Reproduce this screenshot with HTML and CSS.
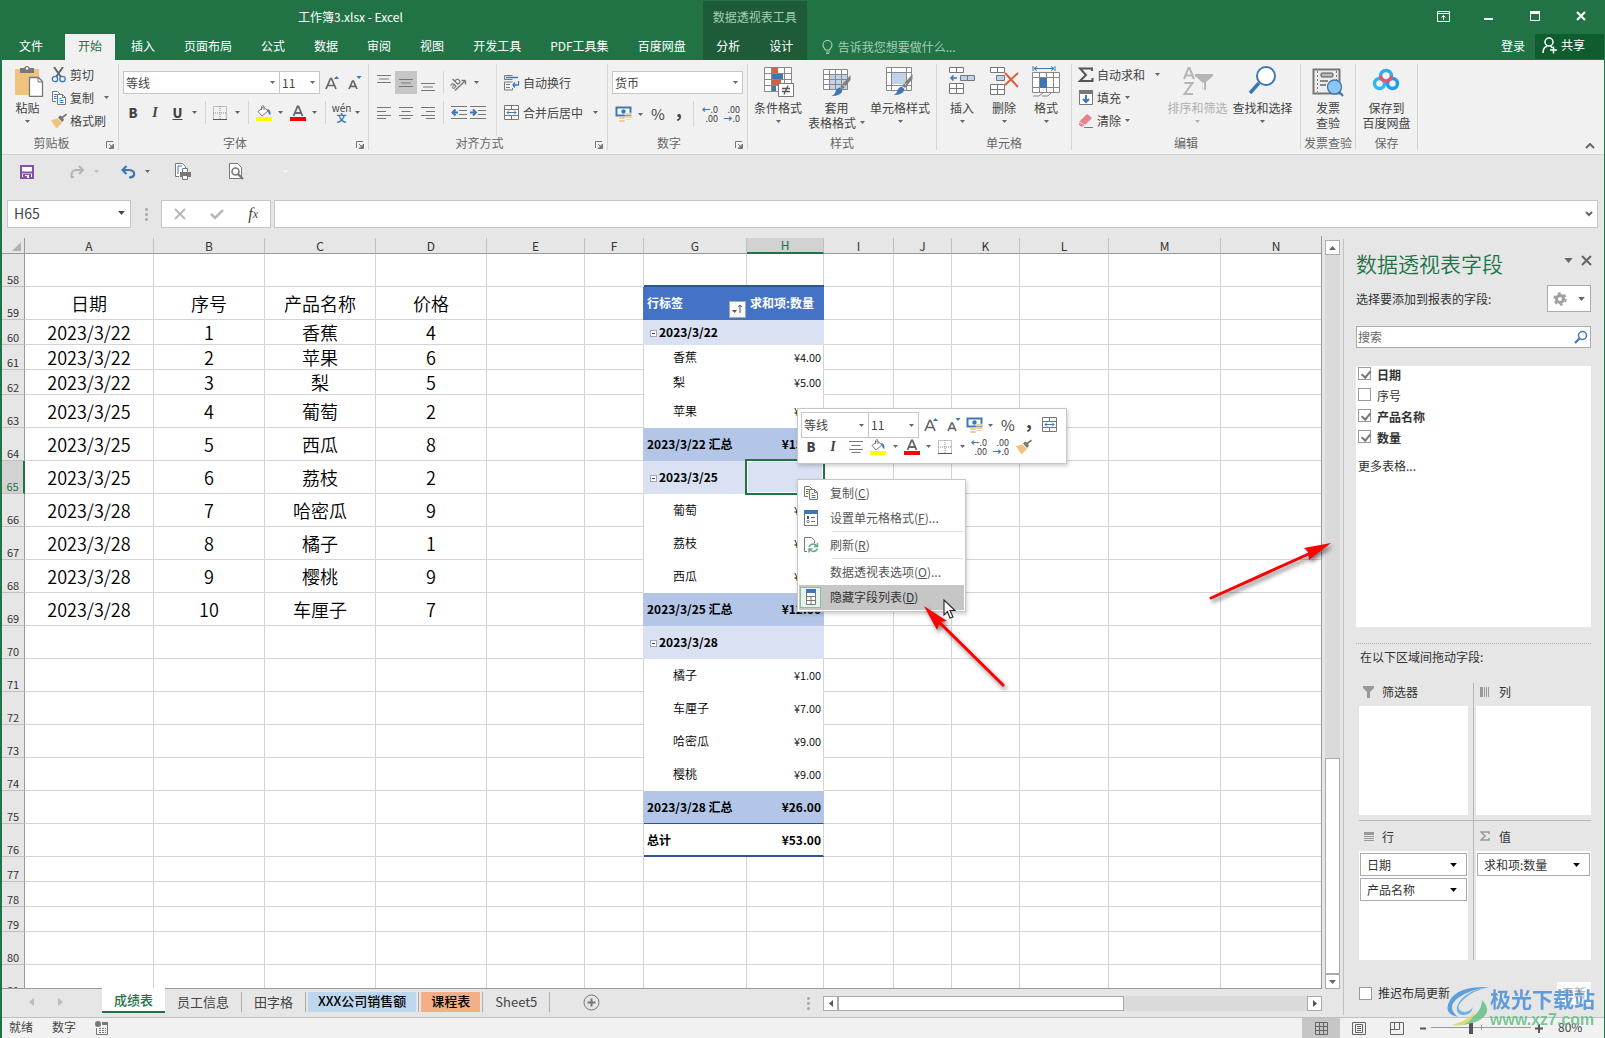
FILE: index.html
```html
<!DOCTYPE html>
<html lang="zh-CN">
<head>
<meta charset="utf-8">
<title>工作簿3.xlsx - Excel</title>
<link rel="stylesheet" href="styles.css">
</head>
<body>
<svg class="defs" aria-hidden="true">
  <symbol id="caret" viewBox="0 0 5 3"><path d="M0 0h5L2.500 3z" fill="currentColor"/></symbol>
  <symbol id="launch" viewBox="0 0 8 8"><path d="M.5 7V.5H7M3 3l3 3M7.500 3v4.500H3z" fill="none" stroke="#777"/><path d="M7.500 3.500v4h-4z" fill="#777"/></symbol>
  <symbol id="copy" viewBox="0 0 16 16"><path d="M5 11.500H1.500v-10h5l3 3" fill="#fff" stroke="#777"/><path d="M6.500 4.500h5l3 3v7h-8z" fill="#fff" stroke="#777"/><path d="M11.500 4.500v3h3" fill="none" stroke="#777"/><path d="M3 4.500h3M3 6.500h2.500M3 8.500h2.500M8.500 8.500h2M8.500 10.500h4M8.500 12.500h4" stroke="#3e78b3"/></symbol>
  <symbol id="brush" viewBox="0 0 16 16"><path d="M15 .5l-4 3-2-1L7 4.500 11 9l2-2-1-2 4-3z" fill="#777"/><path d="M6.500 5.500L0 7l1 2 4.500 6.500L11 10z" fill="#edc37e"/></symbol>
  <symbol id="grow" viewBox="0 0 15 16"><path d="M1 14L5.500 3.500h1L11 14M2.800 10.500h6.500" fill="none" stroke="#666" stroke-width="1.700"/><path d="M9 4l2.500-3L14 4z" fill="#3e78b3"/></symbol>
  <symbol id="shrink" viewBox="0 0 15 16"><path d="M1 14l3.500-8h1L9 14M2.500 11.300h5" fill="none" stroke="#666" stroke-width="1.700"/><path d="M8.500 1h5L11 4z" fill="#3e78b3"/></symbol>
  <symbol id="grid" viewBox="0 0 14 14"><path d="M.5 .5h13v13H.5zM7 0v14M0 7h14" fill="none" stroke="#888" stroke-dasharray="1 1"/><path d="M0 13.500h14" stroke="#555"/></symbol>
  <symbol id="fill" viewBox="0 0 16 16"><path d="M2 6.500L7.500 2 12 6l-6 5z" fill="#fff" stroke="#777"/><path d="M5.500 5V1.500q1.500-2 2.500 0V5" fill="none" stroke="#777"/><path d="M11 4q4 0 3.500 6Q12 9 12 6z" fill="#3e78b3"/><path d="M0 12h16v4H0z" fill="#ff0"/></symbol>
  <symbol id="fcolor" viewBox="0 0 16 16"><path d="M3.500 11L7.500 1.500h1l4 9.500M5 8h6" fill="none" stroke="#666" stroke-width="1.800"/><path d="M0 12h16v4H0z" fill="red"/></symbol>
  <symbol id="money" viewBox="0 0 18 17"><path d="M1.500 1.500h14v8h-14z" fill="#fff" stroke="#3e78b3" stroke-width="2"/><circle cx="8.500" cy="5.500" r="2.200" fill="#3e78b3"/><path d="M10 7h7v2h-7zM10 10h7v2h-7zM4 11h6v2H4zM4 14h6v2H4zM11 13h5v1h-5z" fill="#edc37e" stroke="#fff" stroke-width=".4"/></symbol>
  <symbol id="merge" viewBox="0 0 16 16"><path d="M.5 .5h14v14H.5zM.5 4.500h14M.5 10.500h14M7.500 .5v4M7.500 10.500v4" fill="#fff" stroke="#777"/><path d="M3 7.500h9M5 5.500l-2 2 2 2M10 5.500l2 2-2 2" fill="none" stroke="#3e78b3"/></symbol>
  <symbol id="al" viewBox="0 0 14 14"><path d="M0 1.500h14M0 5.500h9M0 9.500h14M0 12.500h9" stroke="#777"/></symbol>
  <symbol id="ac" viewBox="0 0 14 14"><path d="M0 1.500h14M2.500 5.500h9M0 9.500h14M2.500 12.500h9" stroke="#777"/></symbol>
  <symbol id="ar" viewBox="0 0 14 14"><path d="M0 1.500h14M5 5.500h9M0 9.500h14M5 12.500h9" stroke="#777"/></symbol>
  <symbol id="bars" viewBox="0 0 14 10"><path d="M0 1.500h14M2 5h10M0 8.500h14" stroke="#777"/></symbol>
  <symbol id="search" viewBox="0 0 14 14"><circle cx="8.500" cy="5.500" r="4" fill="none" stroke="#3e78b3" stroke-width="1.500"/><path d="M5.500 8.500L1 13" stroke="#3e78b3" stroke-width="2.200"/></symbol>
  <symbol id="paintbrush" viewBox="0 0 20 22"><path d="M19 0v5l-5 6-3-2z" fill="#808080"/><path d="M10.500 9.500l3 2.500-2 2-3-2z" fill="#808080"/><path d="M8 12.500l3 2.500q-1 6-11 6 4-2 4-5 1-3 4-3.500z" fill="#3e78b3"/></symbol>
</svg>

<div class="app">
<header class="titlebar">
  <div class="caption">
    <h1>工作簿3.xlsx - Excel</h1>
    <div class="winbtns">
      <button aria-label="功能区显示选项"><svg width="13" height="11" viewBox="0 0 13 11"><path d="M.5 .5h12v10H.5zM.5 2.500h12M6.500 9V4.500M4.500 6.500l2-2 2 2" fill="none" stroke="#fff"/></svg></button>
      <button aria-label="最小化"><svg width="10" height="11"><path d="M0 7h9v2H0z" fill="#fff"/></svg></button>
      <button aria-label="最大化"><svg width="10" height="11"><path d="M.5 .5h9v9h-9z" fill="none" stroke="#fff"/><path d="M0 0h10v3H0z" fill="#fff"/></svg></button>
      <button aria-label="关闭"><svg width="10" height="11"><path d="M1 1l8 8M9 1L1 9" stroke="#fff" stroke-width="2"/></svg></button>
    </div>
  </div>
  <nav class="tabs">
    <button>文件</button><button class="on">开始</button><button>插入</button><button>页面布局</button><button>公式</button><button>数据</button><button>审阅</button><button>视图</button><button>开发工具</button><button>PDF工具集</button><button>百度网盘</button>
    <div class="context"><span>数据透视表工具</span><div><button>分析</button><button>设计</button></div></div>
    <label class="tell"><svg width="12" height="15" viewBox="0 0 12 15"><path d="M3.500 10Q1 7 1 5a4.500 4.500 0 0 1 9 0q0 2-2.500 5zM4 12h4M4 13.500h3" fill="none" stroke="#a5cdb5" stroke-width="1.200"/></svg><input placeholder="告诉我您想要做什么..." aria-label="告诉我您想要做什么"></label>
    <button class="login">登录</button>
    <button class="share"><svg width="15" height="17" viewBox="0 0 15 17"><circle cx="7" cy="5" r="4" fill="none" stroke="#fff" stroke-width="1.500"/><path d="M1 16q0-6 4.500-7M8.500 9l2 2M11.500 9.500v7M8 13h7" fill="none" stroke="#fff" stroke-width="1.500"/></svg>共享</button>
  </nav>
</header>

<section class="ribbon">
  <div class="group g-clip">
    <div class="body">
      <button class="big"><svg width="32" height="32" viewBox="0 0 32 32"><path d="M3 4h24v26H3z" fill="#edc37e"/><path d="M8 3h4q3-4 6 0h4v5H8z" fill="#777"/><circle cx="15" cy="3.500" r="1.300" fill="#fff"/><path d="M17.500 12.500h9l4 4v15h-13z" fill="#fff" stroke="#777" stroke-width="1.300"/><path d="M26 12.500v4.500h4.500" fill="none" stroke="#777"/></svg>粘贴<svg class="c"><use href="#caret"/></svg></button>
      <div class="three">
        <button><svg width="16" height="16" viewBox="0 0 16 16"><path d="M3 0l7 10M12 0L5 10" stroke="#666" stroke-width="2"/><circle cx="4" cy="12" r="2.700" fill="none" stroke="#3e78b3" stroke-width="1.300"/><circle cx="11.500" cy="12" r="2.700" fill="none" stroke="#3e78b3" stroke-width="1.300"/></svg>剪切</button>
        <button><svg width="16" height="16"><use href="#copy"/></svg>复制<svg class="c far"><use href="#caret"/></svg></button>
        <button><svg width="16" height="16"><use href="#brush"/></svg>格式刷</button>
      </div>
    </div>
    <footer><span>剪贴板</span><button aria-label="剪贴板设置"><svg width="8" height="8"><use href="#launch"/></svg></button></footer>
  </div>
  <div class="group g-font">
    <div class="body two">
      <div class="row r-font1">
        <span class="combo"><select aria-label="字体"><option>等线</option></select><svg class="c"><use href="#caret"/></svg></span>
        <span class="combo"><select aria-label="字号"><option>11</option></select><svg class="c"><use href="#caret"/></svg></span>
        <button aria-label="增大字号"><svg width="15" height="16"><use href="#grow"/></svg></button>
        <button aria-label="减小字号"><svg width="15" height="16"><use href="#shrink"/></svg></button>
      </div>
      <div class="row r-font2">
        <button class="b">B</button><button class="i">I</button><button class="u">U</button><button aria-label="下划线选项"><svg class="c"><use href="#caret"/></svg></button><i></i>
        <button aria-label="边框"><svg width="14" height="14"><use href="#grid"/></svg></button><button aria-label="边框选项"><svg class="c"><use href="#caret"/></svg></button><i></i>
        <button aria-label="填充颜色"><svg width="16" height="16"><use href="#fill"/></svg></button><button aria-label="填充选项"><svg class="c"><use href="#caret"/></svg></button>
        <button aria-label="字体颜色"><svg width="16" height="16"><use href="#fcolor"/></svg></button><button aria-label="颜色选项"><svg class="c"><use href="#caret"/></svg></button><i></i>
        <button class="wen"><span>wén</span><span>文</span></button><button aria-label="拼音选项"><svg class="c"><use href="#caret"/></svg></button>
      </div>
    </div>
    <footer><span>字体</span><button aria-label="字体设置"><svg width="8" height="8"><use href="#launch"/></svg></button></footer>
  </div>
  <div class="group g-align">
    <div class="body">
      <div class="two">
        <div class="row r-al">
          <button aria-label="顶端对齐" class="top"><svg width="14" height="10"><use href="#bars"/></svg></button><button aria-label="垂直居中" class="sel"><svg width="14" height="10"><use href="#bars"/></svg></button><button aria-label="底端对齐" class="bot"><svg width="14" height="10"><use href="#bars"/></svg></button><i></i>
          <button aria-label="方向" class="orient"><svg width="17" height="16" viewBox="0 0 17 16"><text x="0" y="11" transform="rotate(-45 6 9)" font-size="10" fill="#555">ab</text><path d="M5 15.500L15 6M15.500 5.500v4M15.500 5.500h-4" fill="none" stroke="#777" stroke-width="1.300"/></svg></button><button aria-label="方向选项"><svg class="c"><use href="#caret"/></svg></button>
        </div>
        <div class="row r-al">
          <button aria-label="左对齐"><svg width="14" height="14"><use href="#al"/></svg></button><button aria-label="居中"><svg width="14" height="14"><use href="#ac"/></svg></button><button aria-label="右对齐"><svg width="14" height="14"><use href="#ar"/></svg></button><i></i>
          <button aria-label="减少缩进"><svg width="16" height="14" viewBox="0 0 16 14"><path d="M0 .5h16M8 4.500h8M8 8.500h8M0 12.500h16" stroke="#777"/><path d="M7 6.500H2M4.500 3.500l-3 3 3 3" fill="none" stroke="#3e78b3" stroke-width="2"/></svg></button>
          <button class="wide" aria-label="增加缩进"><svg width="16" height="14" viewBox="0 0 16 14"><path d="M0 .5h16M8 4.500h8M8 8.500h8M0 12.500h16" stroke="#777"/><path d="M0 6.500h5M3 3.500l3 3-3 3" fill="none" stroke="#3e78b3" stroke-width="2"/></svg></button>
        </div>
      </div>
      <div class="two wraps">
        <button><svg width="16" height="16" viewBox="0 0 16 16"><path d="M.5 4.500v-4h8M.5 4.500h8M.5 15v-8h8M.5 15h8v-2" fill="none" stroke="#777"/><path d="M2 9.500h4M2 12.500h4" stroke="#777"/><path d="M2 2.500h12M14.500 6v4H9M11 7.500L9 10l2 2.500" fill="none" stroke="#3e78b3" stroke-width="1.300"/></svg>自动换行</button>
        <button><svg width="16" height="16"><use href="#merge"/></svg>合并后居中<svg class="c far"><use href="#caret"/></svg></button>
      </div>
    </div>
    <footer><span>对齐方式</span><button aria-label="对齐设置"><svg width="8" height="8"><use href="#launch"/></svg></button></footer>
  </div>
  <div class="group g-num">
    <div class="body two">
      <div class="row r-num1"><span class="combo"><select aria-label="数字格式"><option>货币</option></select><svg class="c"><use href="#caret"/></svg></span></div>
      <div class="row r-num2">
        <button aria-label="会计格式"><svg width="18" height="17"><use href="#money"/></svg></button><button aria-label="会计选项"><svg class="c"><use href="#caret"/></svg></button>
        <button class="pct">%</button><button class="comma">,</button><i></i>
        <button class="dec"><span><em>←</em>.0</span><span>.00</span></button>
        <button class="dec"><span>.00</span><span><em>→</em>.0</span></button>
      </div>
    </div>
    <footer><span>数字</span><button aria-label="数字设置"><svg width="8" height="8"><use href="#launch"/></svg></button></footer>
  </div>
  <div class="group g-style">
    <div class="body">
      <button class="big"><svg width="32" height="32" viewBox="0 0 32 32"><path d="M2.500 2.500h27v24h-27zM2.500 8.500h27M2.500 14.500h27M2.500 20.500h27M9.500 2.500v24M22.500 2.500v24" fill="#fff" stroke="#888"/><path d="M10 3h6v5h-6zM10 15h9v5h-9z" fill="#dc5f3c"/><path d="M10 9h11v5H10zM10 21h4v5h-4z" fill="#3e78b3"/><path d="M16.500 18.500h15v13h-15z" fill="#fff" stroke="#777"/><path d="M20 23.500h8M20 26.500h8M26 20.500l-4 9" stroke="#555" stroke-width="1.300"/></svg>条件格式<svg class="c"><use href="#caret"/></svg></button>
      <button class="big"><svg width="32" height="32" viewBox="0 0 32 32"><path d="M2.500 4.500h24v20h-24z" fill="#fff"/><path d="M9 10h18v15H9z" fill="#c0d3ea"/><path d="M2.500 4.500h24v20h-24zM2.500 9.500h24M2.500 14.500h24M2.500 19.500h24M8.500 4.500v20M14.500 4.500v20M20.500 4.500v20" fill="none" stroke="#888"/><svg x="10" y="10" width="21" height="22"><use href="#paintbrush"/></svg></svg>套用<span class="drop">表格格式<svg class="c"><use href="#caret"/></svg></span></button>
      <button class="big"><svg width="32" height="32" viewBox="0 0 32 32"><path d="M2.500 2.500h25v23h-25zM2.500 7.500h25M2.500 20.500h25M7.500 2.500v23M22.500 2.500v23" fill="#fff" stroke="#888"/><path d="M8 8h14v11H8z" fill="#c0d3ea"/><svg x="9" y="9" width="21" height="22"><use href="#paintbrush"/></svg></svg>单元格样式<svg class="c"><use href="#caret"/></svg></button>
    </div>
    <footer><span>样式</span></footer>
  </div>
  <div class="group g-cell">
    <div class="body">
      <button class="big"><svg width="32" height="32" viewBox="0 0 32 32"><path d="M3.500 2.500h14v5h-14zM10.500 2.500v5M3.500 18.500h14v10h-14zM3.500 23.500h14M10.500 18.500v10" fill="#fff" stroke="#777"/><path d="M14.500 10.500h14v5h-14zM21.500 10.500v5" fill="#c0d3ea" stroke="#777"/><path d="M11 13H5M7.500 10.500L5 13l2.500 2.500" fill="none" stroke="#3e78b3" stroke-width="1.600"/></svg>插入<svg class="c"><use href="#caret"/></svg></button>
      <button class="big"><svg width="32" height="32" viewBox="0 0 32 32"><path d="M2.500 2.500h14v5h-14zM9.500 2.500v5M2.500 19.500h14v10h-14zM2.500 24.500h14M9.500 19.500v10" fill="#fff" stroke="#777"/><path d="M8.500 10.500h8v5h-8z" fill="#c0d3ea" stroke="#777"/><path d="M17 8l13 14M30 8L17 20" stroke="#dc5f3c" stroke-width="2"/></svg>删除<svg class="c"><use href="#caret"/></svg></button>
      <button class="big"><svg width="32" height="32" viewBox="0 0 32 32"><path d="M2.500 7.500h27v20h-27zM2.500 12.500h27M2.500 22.500h27M9.500 7.500v20M16.500 7.500v20M23.500 7.500v20" fill="#fff" stroke="#888"/><path d="M10 13h7v10h-7z" fill="#3e78b3"/><path d="M3 1v5M25 1v5M4 3.500h20M7 1.500l-3 2 3 2M21 1.500l3 2-3 2" fill="none" stroke="#3e78b3"/><path d="M3 31h6l4-3M12 31h6l3-3" fill="none" stroke="#888"/></svg>格式<svg class="c"><use href="#caret"/></svg></button>
    </div>
    <footer><span>单元格</span></footer>
  </div>
  <div class="group g-edit">
    <div class="body">
      <div class="three">
        <button><svg width="16" height="16" viewBox="0 0 16 16"><path d="M14 4V1.500H2L8 8l-6 6h12.500V11" fill="none" stroke="#555" stroke-width="2"/></svg>自动求和<svg class="c far"><use href="#caret"/></svg></button>
        <button><svg width="16" height="16" viewBox="0 0 16 16"><path d="M1.500 1.500h13v13h-13z" fill="#fff" stroke="#777"/><path d="M1 0h14v4H1z" fill="#777"/><path d="M8 5v7M5 9l3 3 3-3" fill="none" stroke="#3e78b3" stroke-width="2"/></svg>填充<svg class="c"><use href="#caret"/></svg></button>
        <button><svg width="16" height="16" viewBox="0 0 16 16"><path d="M9 1l5 4-7 7-6-3z" fill="#e8808e"/><path d="M1 9l6 3-2 2H3l-2.500-2.500z" fill="#e8808e" stroke="#fff" stroke-width=".6"/><path d="M6 14.500h9" stroke="#777"/></svg>清除<svg class="c"><use href="#caret"/></svg></button>
      </div>
      <button class="big" disabled><svg width="32" height="32" viewBox="0 0 32 32"><path d="M2 14L6.500 3h1L12 14M4 10.500h6M2.500 18h8L2.500 29h8.500" fill="none" stroke="#b5b5b5" stroke-width="2"/><path d="M13 9h18v2l-7 6v8l-4-1v-7l-7-6z" fill="#b5b5b5"/><path d="M20.500 17l1.500 1v6l-1.500-.5z" fill="#fff"/></svg>排序和筛选<svg class="c"><use href="#caret"/></svg></button>
      <button class="big"><svg width="32" height="32" viewBox="0 0 32 32"><circle cx="19" cy="11" r="9" fill="#fff" stroke="#3e78b3" stroke-width="2"/><path d="M12 18L3 28" stroke="#3e78b3" stroke-width="3.500"/></svg>查找和选择<svg class="c"><use href="#caret"/></svg></button>
    </div>
    <footer><span>编辑</span></footer>
  </div>
  <div class="group g-inv">
    <div class="body"><button class="big"><svg width="32" height="32" viewBox="0 0 32 32"><path d="M1.500 4.500h26v24h-26z" fill="#ededed" stroke="#777" stroke-width="2"/><path d="M5.500 6v21M24.500 6v21" stroke="#777" stroke-dasharray="2 2"/><rect x="9" y="8" width="12" height="4" rx="1" fill="#bbb" stroke="#555"/><path d="M8 16h8M8 20h6" stroke="#666" stroke-width="1.500"/><circle cx="22.500" cy="22" r="7" fill="#8fc5f5" stroke="#3e78a8" stroke-width="1.300"/><path d="M27.500 27l3.500 4" stroke="#3e78a8" stroke-width="2"/></svg><span>发票</span><span>查验</span></button></div>
    <footer><span>发票查验</span></footer>
  </div>
  <div class="group g-save">
    <div class="body"><button class="big"><svg width="32" height="32" viewBox="0 0 32 32"><circle cx="9.500" cy="18.500" r="5" fill="none" stroke="#2cb8f5" stroke-width="3.500"/><circle cx="22.500" cy="18.500" r="5" fill="none" stroke="#1a9df5" stroke-width="3.500"/><path d="M10.500 11a5.500 5.500 0 0 1 11 0" fill="none" stroke="#2cb0e8" stroke-width="3.500"/><path d="M10.500 10.500a5.500 5.500 0 0 0 11 0" fill="none" stroke="#ee4f72" stroke-width="3.500"/></svg><span>保存到</span><span>百度网盘</span></button></div>
    <footer><span>保存</span></footer>
  </div>
  <button class="collapse" aria-label="折叠功能区"><svg width="10" height="6"><path d="M1 5l4-4 4 4" fill="none" stroke="#666" stroke-width="2"/></svg></button>
</section>

<div class="qat">
  <button aria-label="保存"><svg width="14" height="14"><path d="M1 1h12v12H1z" fill="#fff" stroke="#8550a8" stroke-width="2"/><path d="M1 6.500h12v2H1zM3 9h8v5H3z" fill="#8550a8"/><path d="M5 10h4v3H7v-2H5z" fill="#fff"/></svg></button>
  <button class="q2" aria-label="恢复"><svg width="15" height="14"><path d="M9 1l4 4-4 4M13 5H6Q1 5 1.500 12H4" fill="none" stroke="#b5b5b5" stroke-width="2"/></svg><svg class="c pale"><use href="#caret"/></svg></button>
  <button class="q3" aria-label="撤消"><svg width="15" height="14"><path d="M5.500 1l-4 4 4 4M2 5h6q6 .5 5 5-1 2.500-5 2.500" fill="none" stroke="#3e78b3" stroke-width="2.200"/></svg><svg class="c"><use href="#caret"/></svg></button>
  <button class="q4" aria-label="快速打印"><svg width="16" height="17"><path d="M4 13.500H.5V.5h7l3 3V6" fill="#fff" stroke="#777"/><path d="M3 11V3h4" fill="none" stroke="#3e78b3"/><path d="M5 9h11v5H5z" fill="#777"/><path d="M7.500 5.500h5v4h-5zM7.500 12.500h5v4h-5z" fill="#fff" stroke="#777"/></svg></button>
  <button class="q5" aria-label="打印预览"><svg width="15" height="17"><path d="M.5 .5h8l4 4v11H.5z" fill="#fff" stroke="#777"/><circle cx="6.500" cy="8.500" r="3.500" fill="#fff" stroke="#777" stroke-width="1.600"/><path d="M9 11l5 5" stroke="#777" stroke-width="2.200"/></svg></button>
  <button class="q6" aria-label="自定义"><svg class="c"><use href="#caret"/></svg></button>
</div>

<div class="fbar">
  <label class="namebox"><input value="H65" aria-label="名称框"><svg width="7" height="4"><use href="#caret"/></svg></label>
  <span class="dots"></span>
  <div class="fbtns">
    <button aria-label="取消"><svg width="12" height="12"><path d="M1 1l10 10M11 1L1 11" stroke="#b8b8b8" stroke-width="2"/></svg></button>
    <button aria-label="输入"><svg width="14" height="12"><path d="M1 6l4 4 8-8" fill="none" stroke="#b8b8b8" stroke-width="2.500"/></svg></button>
    <button class="fx" aria-label="插入函数"><b>f</b>x</button>
  </div>
  <label class="formula"><input aria-label="编辑栏"><svg width="8" height="6"><path d="M1 1l3 3 3-3" fill="none" stroke="#666" stroke-width="2"/></svg></label>
</div>

<main class="work">
  <div class="left">
    <div class="sheetrow">
      <div class="sheet">
      <table>
        <colgroup><col class="cr"><col class="ca"><col class="cb"><col class="cb"><col class="cb"><col class="ce"><col class="cf"><col class="cg"><col class="ch"><col class="ci"><col class="cj"><col class="ck"><col class="cl"><col class="cm"><col></colgroup>
        <thead><tr><th class="corner"><svg width="9" height="9"><path d="M9 0v9H0z" fill="#b2b2b2"/></svg></th><th>A<th>B<th>C<th>D<th>E<th>F<th>G<th class="hsel">H<th>I<th>J<th>K<th>L<th>M<th>N</tr></thead>
        <tbody>
        <tr><th>58<td><td><td><td><td><td><td><td><td><td><td><td><td><td></tr>
        <tr class="heads"><th>59<td>日期<td>序号<td>产品名称<td>价格<td><td><td class="ph g"><div>行标签<button aria-label="筛选行标签"><svg width="11" height="10"><path d="M0 6h5L2.500 9z" fill="#555"/><path d="M8 9V1M6 3l2-2 2 2" fill="none" stroke="#555"/></svg></button></div><td class="ph h">求和项:数量<td><td><td><td><td><td></tr>
        <tr class="s pd"><th>60<td>2023/3/22<td>1<td>香蕉<td>4<td><td><td class="g"><button class="tog" aria-label="折叠"></button>2023/3/22<td class="h"><td><td><td><td><td><td></tr>
        <tr class="s pi"><th>61<td>2023/3/22<td>2<td>苹果<td>6<td><td><td class="g">香蕉<td class="h">¥4.00<td><td><td><td><td><td></tr>
        <tr class="s pi"><th>62<td>2023/3/22<td>3<td>梨<td>5<td><td><td class="g">梨<td class="h">¥5.00<td><td><td><td><td><td></tr>
        <tr class="pi"><th>63<td>2023/3/25<td>4<td>葡萄<td>2<td><td><td class="g">苹果<td class="h">¥6.00<td><td><td><td><td><td></tr>
        <tr class="pt"><th>64<td>2023/3/25<td>5<td>西瓜<td>8<td><td><td class="g">2023/3/22 汇总<td class="h">¥15.00<td><td><td><td><td><td></tr>
        <tr class="pd"><th class="rsel">65<td>2023/3/25<td>6<td>荔枝<td>2<td><td><td class="g"><button class="tog" aria-label="折叠"></button>2023/3/25<td class="h cur"><td><td><td><td><td><td></tr>
        <tr class="pi"><th>66<td>2023/3/28<td>7<td>哈密瓜<td>9<td><td><td class="g">葡萄<td class="h">¥2.00<td><td><td><td><td><td></tr>
        <tr class="pi"><th>67<td>2023/3/28<td>8<td>橘子<td>1<td><td><td class="g">荔枝<td class="h">¥2.00<td><td><td><td><td><td></tr>
        <tr class="pi"><th>68<td>2023/3/28<td>9<td>樱桃<td>9<td><td><td class="g">西瓜<td class="h">¥8.00<td><td><td><td><td><td></tr>
        <tr class="pt"><th>69<td>2023/3/28<td>10<td>车厘子<td>7<td><td><td class="g">2023/3/25 汇总<td class="h">¥12.00<td><td><td><td><td><td></tr>
        <tr class="pd"><th>70<td><td><td><td><td><td><td class="g"><button class="tog" aria-label="折叠"></button>2023/3/28<td class="h"><td><td><td><td><td><td></tr>
        <tr class="pi"><th>71<td><td><td><td><td><td><td class="g">橘子<td class="h">¥1.00<td><td><td><td><td><td></tr>
        <tr class="pi"><th>72<td><td><td><td><td><td><td class="g">车厘子<td class="h">¥7.00<td><td><td><td><td><td></tr>
        <tr class="pi"><th>73<td><td><td><td><td><td><td class="g">哈密瓜<td class="h">¥9.00<td><td><td><td><td><td></tr>
        <tr class="pi"><th>74<td><td><td><td><td><td><td class="g">樱桃<td class="h">¥9.00<td><td><td><td><td><td></tr>
        <tr class="pt last"><th>75<td><td><td><td><td><td><td class="g">2023/3/28 汇总<td class="h">¥26.00<td><td><td><td><td><td></tr>
        <tr class="total"><th>76<td><td><td><td><td><td><td class="g">总计<td class="h">¥53.00<td><td><td><td><td><td></tr>
        <tr class="s"><th>77<td><td><td><td><td><td><td><td><td><td><td><td><td><td></tr>
        <tr class="s"><th>78<td><td><td><td><td><td><td><td><td><td><td><td><td><td></tr>
        <tr class="s"><th>79<td><td><td><td><td><td><td><td><td><td><td><td><td><td></tr>
        <tr><th>80<td><td><td><td><td><td><td><td><td><td><td><td><td><td></tr>
        <tr><th>81<td><td><td><td><td><td><td><td><td><td><td><td><td><td></tr>
        </tbody>
      </table>
      </div>
      <div class="vscroll"><button aria-label="向上滚动"><svg width="7" height="4"><path d="M0 4l3.500-4L7 4z" fill="#666"/></svg></button><div class="vtrack"><div class="vthumb"></div></div><button aria-label="向下滚动"><svg width="7" height="4"><path d="M0 0l3.500 4L7 0z" fill="#666"/></svg></button></div>
    </div>
    <div class="sheetbar">
      <div class="nav"><svg width="5" height="8"><path d="M5 0v8L0 4z" fill="#bbb"/></svg><svg width="5" height="8"><path d="M0 0v8l5-4z" fill="#bbb"/></svg></div>
      <div class="stabs"><button class="on">成绩表</button><button>员工信息</button><button>田字格</button><button class="blue"><span>XXX公司销售额</span></button><button class="orange"><span>课程表</span></button><button>Sheet5</button></div>
      <button class="add" aria-label="新工作表"><svg width="17" height="17"><circle cx="8.500" cy="8.500" r="7.500" fill="none" stroke="#777"/><path d="M8.500 4.500v8M4.500 8.500h8" stroke="#777" stroke-width="2"/></svg></button>
      <span class="dots"></span>
      <div class="hscroll"><button aria-label="向左滚动"><svg width="4" height="7"><path d="M4 0v7L0 3.500z" fill="#555"/></svg></button><div class="htrack"><div class="hthumb"></div></div><button aria-label="向右滚动"><svg width="4" height="7"><path d="M0 0v7l4-3.500z" fill="#555"/></svg></button></div>
    </div>
  </div>
  <aside class="pane">
    <div class="ptitle"><h2>数据透视表字段</h2><button aria-label="任务窗格选项"><svg width="9" height="5"><use href="#caret"/></svg></button><button aria-label="关闭窗格"><svg width="11" height="11"><path d="M1 1l9 9M10 1l-9 9" stroke="#666" stroke-width="2"/></svg></button></div>
    <div class="pchoose"><span>选择要添加到报表的字段:</span><button aria-label="工具"><svg width="14" height="14"><circle cx="7" cy="7" r="3.500" fill="none" stroke="#a0a0a0" stroke-width="3"/><circle cx="7" cy="7" r="5.700" fill="none" stroke="#a0a0a0" stroke-width="2" stroke-dasharray="3 2.970"/></svg><svg width="7" height="4"><use href="#caret"/></svg></button></div>
    <label class="psearch"><input placeholder="搜索" aria-label="搜索"><svg width="14" height="14"><use href="#search"/></svg></label>
    <div class="plist">
      <label><input type="checkbox" checked><b>日期</b></label>
      <label><input type="checkbox"><span>序号</span></label>
      <label><input type="checkbox" checked><b>产品名称</b></label>
      <label><input type="checkbox" checked><b>数量</b></label>
      <a href="#more">更多表格...</a>
    </div>
    <p class="drag">在以下区域间拖动字段:</p>
    <div class="areas">
      <section><h3><svg width="12" height="12"><path d="M0 0h11v2L7 6v6H4V6L0 2z" fill="#999"/></svg>筛选器</h3><div></div></section>
      <section><h3><svg width="12" height="12"><path d="M0 1h3v10H0zM4 1h1v10H4zM6 1h1v10H6zM8 1h1v10H8z" fill="#999"/></svg>列</h3><div></div></section>
      <section><h3><svg width="12" height="12"><path d="M1 1h10v3H1zM1 5h10v1H1zM1 7h10v1H1zM1 9h10v1H1z" fill="#999"/></svg>行</h3><div><button>日期<svg width="7" height="4"><use href="#caret"/></svg></button><button>产品名称<svg width="7" height="4"><use href="#caret"/></svg></button></div></section>
      <section><h3><svg width="12" height="12"><path d="M9 3V1H1l4 4-4 4h8V7" fill="none" stroke="#999" stroke-width="1.500"/></svg>值</h3><div><button>求和项:数量<svg width="7" height="4"><use href="#caret"/></svg></button></div></section>
    </div>
    <div class="defer"><label><input type="checkbox">推迟布局更新</label><button disabled>更新</button></div>
  </aside>
</main>

<footer class="status">
  <span>就绪</span><span>数字</span>
  <svg width="14" height="14"><circle cx="3" cy="3" r="3" fill="#777"/><path d="M7 1h6v3H7z" fill="#777"/><path d="M1.500 7v6.500h11V4" fill="none" stroke="#777"/><path d="M4 7.500h7M4 9.500h7M4 11.500h7" stroke="#777" stroke-dasharray="2 1"/></svg>
  <div class="views">
    <button class="on" aria-label="普通"><svg width="13" height="13"><path d="M.5 .5h12v12H.5zM.5 4.500h12M.5 8.500h12M4.500 .5v12M8.500 .5v12" fill="none" stroke="#666"/></svg></button>
    <button aria-label="页面布局"><svg width="14" height="13"><path d="M.5 .5h13v12H.5zM3.500 2.500h7v8h-7zM5 4.500h4M5 6.500h4M5 8.500h4" fill="none" stroke="#666"/></svg></button>
    <button aria-label="分页预览"><svg width="14" height="13"><path d="M.5 .5h13v12H.5zM4.500 .5v7M9.500 .5v7M.5 7.500h9" fill="none" stroke="#666"/></svg></button>
  </div>
  <div class="zoom"><button aria-label="缩小"><svg width="7" height="9"><path d="M0 3.500h6v2H0z" fill="#555"/></svg></button><input type="range" min="0" max="100" value="40" aria-label="缩放"><button aria-label="放大"><svg width="9" height="9"><path d="M0 3.500h8v2H0zM3 0h2v9H3z" fill="#555"/></svg></button><output>80%</output></div>
</footer>

<div class="mini">
  <div class="row m1">
    <span class="combo"><select aria-label="字体"><option>等线</option></select><svg class="c"><use href="#caret"/></svg></span>
    <span class="combo"><select aria-label="字号"><option>11</option></select><svg class="c"><use href="#caret"/></svg></span>
    <button aria-label="增大字号"><svg width="15" height="16"><use href="#grow"/></svg></button>
    <button aria-label="减小字号"><svg width="15" height="16"><use href="#shrink"/></svg></button>
    <button aria-label="会计格式"><svg width="18" height="17"><use href="#money"/></svg></button><button aria-label="会计选项"><svg class="c"><use href="#caret"/></svg></button>
    <button class="pct">%</button><button class="comma">,</button>
    <button aria-label="合并"><svg width="16" height="16"><use href="#merge"/></svg></button>
  </div>
  <div class="row m2">
    <button class="b">B</button><button class="i">I</button>
    <button aria-label="居中"><svg width="14" height="14"><use href="#ac"/></svg></button>
    <button aria-label="填充颜色"><svg width="16" height="16"><use href="#fill"/></svg></button><button aria-label="填充选项"><svg class="c"><use href="#caret"/></svg></button>
    <button aria-label="字体颜色"><svg width="16" height="16"><use href="#fcolor"/></svg></button><button aria-label="颜色选项"><svg class="c"><use href="#caret"/></svg></button>
    <button aria-label="边框"><svg width="14" height="14"><use href="#grid"/></svg></button><button aria-label="边框选项"><svg class="c"><use href="#caret"/></svg></button>
    <button class="dec"><span><em>←</em>.0</span><span>.00</span></button>
    <button class="dec"><span>.00</span><span><em>→</em>.0</span></button>
    <button aria-label="格式刷"><svg width="16" height="16"><use href="#brush"/></svg></button>
  </div>
</div>

<div class="menu" role="menu">
  <button role="menuitem"><span><svg width="16" height="16"><use href="#copy"/></svg></span>复制(<u>C</u>)</button>
  <button role="menuitem"><span><svg width="16" height="16"><path d="M1.500 1.500h13v14h-13z" fill="#fff" stroke="#777"/><path d="M1 0h14v4H1z" fill="#3e78b3"/><path d="M8 7.500h4M8 11.500h4" stroke="#777"/><path d="M4 6h2v3H4z" fill="#555"/><circle cx="5" cy="11.500" r="1.200" fill="none" stroke="#777"/></svg></span>设置单元格格式(<u>F</u>)...</button>
  <hr>
  <button role="menuitem"><span><svg width="16" height="16"><path d="M4 14.500H1.500V.5h7l3 3V6" fill="#fff" stroke="#777"/><path d="M6 10q1-3 4.500-3 2 0 3 2M14.500 6v3.500H11M14.500 11.500q-1 3-4.500 3-2 0-3-2M6 15.500V12h3.500" fill="none" stroke="#68a890" stroke-width="1.500"/></svg></span>刷新(<u>R</u>)</button>
  <hr>
  <button role="menuitem"><span></span>数据透视表选项(<u>O</u>)...</button>
  <button role="menuitem" class="hot"><span><svg width="12" height="16"><path d="M1.500 1.500h9v14h-9zM1.500 7.500h9M1.500 11.500h9M6 7v8" fill="#fff" stroke="#777"/><path d="M1 0h10v4H1z" fill="#3e78b3"/></svg></span>隐藏字段列表(<u>D</u>)</button>
</div>

<svg class="arrow a1" width="130" height="70" viewBox="0 0 130 70"><path d="M6 60L108 14" stroke="red" stroke-width="3" stroke-linecap="round"/><path d="M126 5L99 10l4 4 1 8z" fill="red"/></svg>
<svg class="arrow a2" width="92" height="92" viewBox="0 0 92 92"><path d="M83 83L20 21" stroke="red" stroke-width="3" stroke-linecap="round"/><path d="M4 4l23 15-7 1-3 8z" fill="red"/></svg>
<svg class="cursor" width="14" height="21" viewBox="0 0 14 21"><path d="M1 1v15l3.500-3.500L7 19l3-1-3-6.500h5z" fill="#fff" stroke="#223" stroke-width="1.100"/></svg>
<div class="mark"><svg width="44" height="42" viewBox="0 0 44 42"><path d="M43 1Q28 4 18 13q-9 8-3 12 7 3 12-4-2 9-11 8-8-2-4-11Q20 4 43 1z" fill="#58a9e0"/><path d="M43 1Q12 0 4 14-4 28 12 31 0 21 12 12 22 4 43 1z" fill="#4a93d8"/><path d="M36 14q12 12-4 21-11 5-26 4 17-4 25-12 5-6 5-13z" fill="#68c08a"/><path d="M6 39q18-5 23-14-2 10-12 14z" fill="#dcd85a"/></svg><p><strong>极光下载站</strong><span>www.xz7.com</span></p></div>
</div>
</body>
</html>
```
FILE: styles.css
```css
* { box-sizing: border-box; }
body { margin: 0; font: 12px/16px "Noto Sans CJK SC", "Noto Sans", sans-serif; color: #444; }
button, input, select { font: inherit; color: inherit; margin: 0; padding: 0; border: 0; background: none; border-radius: 0; outline: 0; }
button { display: flex; align-items: center; justify-content: center; white-space: nowrap; }
svg { display: block; flex: none; }
h1, h2, h3, p { margin: 0; font-weight: 400; font-size: 12px; }
.defs { position: absolute; width: 0; height: 0; }
.c { width: 5px; height: 3px; color: #666; }
.app { position: relative; display: flex; flex-direction: column; height: 100vh; overflow: hidden; background: #e6e6e6; border-left: 2px solid #217346; border-right: 1px solid #217346; }

/* title bar and tabs */
.titlebar { background: #217346; color: #fff; }
.caption { display: flex; height: 34px; align-items: center; justify-content: space-between; padding: 0 18px 0 296px; }
.winbtns { display: flex; gap: 36px; padding-bottom: 2px; }
.winbtns button { width: 10px; }
.tabs { display: flex; height: 26px; align-items: stretch; }
.tabs > button { padding: 0 13px 3px; margin-right: 3px; }
.tabs > button:first-child { padding-left: 17px; margin-right: 9px; }
.tabs .on { background: #f1f1f1; color: #217346; }
.context { width: 104px; margin: -33px 0 0 1px; background: #1e5c39; display: flex; flex-direction: column; align-items: center; color: #a5cdb5; line-height: 32px; }
.context div { display: flex; flex: 1; gap: 29px; color: #fff; line-height: 16px; padding-bottom: 2px; }
.tell { display: flex; align-items: center; gap: 4px; margin-left: 15px; flex: 1; }
.tell input { flex: 1; }
.tell input::placeholder { color: #a5cdb5; opacity: 1; }
.tabs .login { padding: 0 10px 3px; margin: 0; }
.tabs .share { background: #0f5c2f; width: 69px; justify-content: flex-start; gap: 4px; padding: 0 0 3px 7px; margin: 0 0 1px; }

/* ribbon */
.ribbon { position: relative; display: flex; height: 95px; background: #f1f1f1; border-bottom: 1px solid #d0d0d0; flex: none; }
.group { display: flex; flex-direction: column; margin: 4px 0; border-right: 1px solid #d5d5d5; height: 86px; flex: none; }
.body { flex: 1; display: flex; }
.group footer { display: flex; height: 14px; line-height: 14px; color: #666; }
.group footer span { flex: 1; text-align: center; white-space: nowrap; }
.group footer button { width: 17px; padding-top: 3px; }
.g-clip { width: 117px; }
.g-font { width: 250px; }
.g-align { width: 239px; }
.g-num { width: 140px; }
.g-style { width: 189px; }
.g-cell { width: 135px; }
.g-edit { width: 229px; }
.g-inv { width: 55px; }
.g-save { width: 62px; }
.g-clip .big { width: 49px; padding-left: 2px; }
.g-style .body { padding-left: 2px; }
.g-style .big:nth-child(1) { width: 56px; }
.g-style .big:nth-child(2) { width: 61px; }
.g-style .big:nth-child(3) { width: 66px; }
.g-cell .body { padding-left: 4px; }
.g-cell .big { width: 42px; }
.g-edit .big { width: 65px; }
.g-edit .three { width: 93px; padding-left: 6px; }
.g-inv .body, .g-save .body { justify-content: center; }
.big { display: flex; flex-direction: column; justify-content: flex-start; line-height: 15px; padding-top: 1px; }
.big > svg:first-child { margin-bottom: 3px; }
.big > .c { margin-top: 5px; }
.big .drop { display: flex; align-items: center; gap: 4px; }
.big:disabled, .big:disabled .c { color: #b0b0b0; }
.three { display: flex; flex-direction: column; margin-top: -1px; }
.three button { height: 23px; justify-content: flex-start; gap: 3px; }
.three .c { margin-left: 1px; }
.three .far { margin-left: 7px; }
.two { display: flex; flex-direction: column; padding-top: 7px; gap: 7px; }
.g-font .two, .g-align .two, .g-num .two { padding-left: 4px; }
.row { display: grid; height: 23px; }
.row i { width: 1px; background: #d5d5d5; justify-self: center; }
.r-font1 { grid-template-columns: 157px 40px 25px 21px; }
.r-font2 { grid-template-columns: 20px 24px 21px 13px 8px 22px 13px 8px 23px 11px 23px 11px 11px 21px 11px; }
.r-al { grid-template-columns: 22px 22px 22px 8px 23px 13px 9px; }
.r-al .wide { justify-content: flex-start; grid-column: span 2; }
.r-al .top { padding-bottom: 8px; }
.r-al .bot { padding-top: 8px; }
.sel { background: #c6c6c6; }
.wraps { border-left: 1px solid #dcdcdc; margin-left: 4px; }
.g-align .wraps { padding-left: 7px; }
.wraps button { height: 23px; gap: 3px; justify-content: flex-start; }
.wraps .far { margin-left: 7px; }
.r-num1 { grid-template-columns: 131px; }
.r-num2 { grid-template-columns: 24px 9px 26px 16px 12px 22px 22px; }
.combo { display: flex; align-items: center; background: #fff; border: 1px solid #c6c6c6; padding-right: 4px; }
.combo + .combo { border-left: 0; }
.combo select { appearance: none; flex: 1; min-width: 0; height: 20px; padding-left: 2px; }
.b, .u { font-weight: 900; font-size: 13px; }
.i { font: italic bold 14px "Liberation Serif", serif; }
.u { text-decoration: underline; }
.pct { font-size: 15px; }
.comma { font-size: 18px; font-weight: 700; padding-bottom: 10px; }
.wen { flex-direction: column; font-size: 10px; line-height: 10px; }
.wen span + span { color: #3e78b3; font-weight: 700; }
.dec { flex-direction: column; align-items: flex-end; padding-right: 3px; font-size: 9px; line-height: 9px; }
.dec em { font-style: normal; font-weight: 900; color: #3e78b3; }
.collapse { position: absolute; right: 9px; bottom: 5px; }

/* quick access and formula bar */
.qat { display: flex; height: 35px; align-items: center; padding: 0 0 2px 18px; flex: none; }
.qat button { gap: 9px; height: 16px; }
.q2 { margin-left: 36px; }
.q3 { margin-left: 22px; }
.q4 { margin-left: 25px; }
.q5 { margin-left: 38px; }
.q6 { margin-left: 39px; }
.qat .pale { color: #bbb; }
.qat .q6 .c { color: #f8f8f8; }
.fbar { display: flex; height: 38px; padding: 10px 6px 0 5px; align-items: stretch; flex: none; }
.fbar > * { height: 28px; }
.namebox, .fbtns, .formula { background: #fff; border: 1px solid #c6c6c6; display: flex; align-items: center; }
.namebox { width: 124px; padding: 0 5px 2px 6px; font-size: 14px; }
.namebox input { flex: 1; min-width: 0; }
.dots { width: 3px; margin: 0 13px 0 14px; background: radial-gradient(circle, #aaa 1px, transparent 2px) center / 3px 5px; align-self: center; }
.fbar .dots { height: 15px; }
.fbtns { width: 110px; justify-content: space-between; padding: 0 12px; }
.fx { font: italic 12px "Liberation Serif", serif; }
.fx b { font-size: 16px; font-weight: 400; }
.formula { flex: 1; margin-left: 3px; padding-right: 4px; }
.formula input { flex: 1; }

/* worksheet */
.work { flex: 1; display: flex; min-height: 0; }
.left { flex: 1; display: flex; flex-direction: column; min-width: 0; padding-top: 8px; }
.sheetrow { flex: 1; display: flex; min-height: 0; }
.sheet { flex: 1; min-width: 0; overflow: hidden; border-bottom: 1px solid #999; padding-top: 2px; }
.sheet { border-right: 1px solid #999; }
table { width: calc(100% + 11px); table-layout: fixed; border-spacing: 0; background: #fff; }
.cr { width: 23px; }
.ca { width: 129px; }
.cb { width: 111px; }
.ce { width: 98px; }
.cf { width: 59px; }
.cg { width: 103px; }
.ch { width: 77px; }
.ci { width: 70px; }
.cj { width: 58px; }
.ck { width: 68px; }
.cl { width: 89px; }
.cm { width: 112px; }
th { background: #e6e6e6; font-weight: 400; color: #333; padding: 0; }
thead th { height: 16px; line-height: 15px; border-right: 1px solid #c0c0c0; border-bottom: 1px solid #999; }
thead th:first-child { border-right-color: #999; }
.corner svg { margin: 1px 3px 0 auto; }
.hsel { background: #d2d2d2; color: #217346; border-bottom: 2px solid #217346; line-height: 14px; }
tbody th { border-right: 1px solid #999; border-bottom: 1px solid #c0c0c0; vertical-align: bottom; font-size: 11px; line-height: 13px; }
th.rsel { background: #d2d2d2; color: #217346; border-right: 2px solid #217346; }
td { height: 33px; padding: 0; border-right: 1px solid #d4d4d4; border-bottom: 1px solid #d4d4d4; text-align: center; font-size: 18px; font-weight: 350; line-height: 20px; color: #000; white-space: nowrap; }
.s td { height: 25px; }
td.g { text-align: left; padding-left: 3px; font-size: 12px; line-height: 16px; border-right: 0; border-bottom-color: transparent; }
td.h { text-align: right; padding-right: 2px; font-size: 11px; line-height: 16px; border-bottom-color: transparent; }
.pi td.g { padding-left: 29px; }
.pd .g, .pd .h, .pt .g, .pt .h, td.ph { font-weight: 700; border-color: transparent; }
.pd .g, .pd .h { background: #d9e1f2; }
.pt .g, .pt .h { background: #b4c6e7; }
.pd td.g { padding-left: 6px; box-shadow: -1px 0 #d9e1f2; }
.pt .g { box-shadow: -1px 0 #b4c6e7; }
.pt .h, .total .h { font-size: 12px; }
.last td.g, .last td.h { border-bottom-color: #2f5496; }
.total td.g, .total td.h { font-weight: 700; border-bottom: 2px solid #2f5496; }
td.ph { background: #4472c4; color: #fff; font-size: 12px; box-shadow: 0 -2px #2f5496; }
td.ph.g { box-shadow: -1px 0 #4472c4, 0 -2px #2f5496; }
td.ph.h { text-align: left; padding: 0 0 0 3px; font-size: 12px; }
.ph div { display: flex; justify-content: space-between; align-items: center; height: 30px; }
.ph button { width: 17px; height: 17px; background: #f8f8f8; border: 1px solid #aaa; margin: 12px 1px 0 0; }
.tog { display: inline-flex; width: 7px; height: 7px; border: 1px solid #9aa6bd; background: linear-gradient(#445, #445) center / 3px 1px no-repeat, #fff; margin-right: 2px; vertical-align: 1px; }
.cur { position: relative; }
.cur::after { content: ""; position: absolute; inset: -2px; border: 2px solid #217346; box-shadow: inset 0 0 0 1px #fff; }
.vscroll { width: 21px; padding: 4px 3px 0; display: flex; flex-direction: column; }
.vscroll button, .hscroll button { width: 15px; height: 15px; background: #fff; border: 1px solid #ababab; flex: none; }
.vtrack { flex: 1; background: #dadada; display: flex; flex-direction: column; justify-content: flex-end; }
.vthumb { height: 30%; background: #fff; border: 1px solid #ababab; }

.sheetbar { display: flex; height: 28px; flex: none; padding-right: 21px; }
.nav { display: flex; width: 100px; padding: 9px 0 0 27px; gap: 24px; }
.stabs { display: flex; height: 24px; font-size: 13px; margin-top: -1px; }
.stabs button { padding: 0 12px 1px; border-right: 1px solid #ababab; height: 20px; margin-top: 4px; }
.stabs .on { background: #fff; color: #217346; font-weight: 500; border-right: 0; border-bottom: 2px solid #217346; height: 25px; margin: 0; padding-bottom: 0; }
.stabs .blue, .stabs .orange { padding: 0 2px 1px; color: #000; font-weight: 500; }
.stabs span { padding: 1px 10px 3px; }
.blue span { background: #bdd7ee; }
.orange span { background: #f4b084; }
.add { margin-left: 33px; height: 22px; padding-top: 4px; }
.sheetbar .dots { height: 15px; margin: 0 13px 0 auto; }
.hscroll { display: flex; flex: 0 1 499px; padding-top: 7px; }
.htrack { flex: 1; background: #dadada; height: 15px; }
.hthumb { width: 61%; height: 15px; background: #fff; border: 1px solid #ababab; }

/* field pane */
.pane { width: 261px; flex: none; margin: 11px 0 2px; border-left: 1px solid #c0c0c0; padding: 0 13px 0 12px; display: flex; flex-direction: column; color: #333; }
.ptitle { display: flex; height: 46px; align-items: center; gap: 13px; padding-top: 1px; }
.ptitle button { color: #666; padding-bottom: 4px; }
.ptitle button + button { margin: 0 -1px 0 -5px; }
h2 { flex: 1; font-size: 21px; line-height: 30px; color: #217346; font-weight: 350; }
.pchoose { display: flex; justify-content: space-between; align-items: center; height: 27px; }
.pchoose button { width: 44px; height: 27px; border: 1px solid #ababab; background: #fff; gap: 11px; color: #666; }
.psearch { display: flex; align-items: center; margin-top: 14px; height: 22px; border: 1px solid #ababab; background: #fff; padding: 0 2px 0 1px; flex: none; }
.psearch input { flex: 1; min-width: 0; }
.psearch input::placeholder { color: #666; opacity: 1; }
.plist { flex: 1; background: #fff; margin-top: 18px; padding-left: 2px; }
.plist label { display: flex; height: 21px; gap: 6px; padding-top: 1px; }
.plist a { display: block; color: #333; text-decoration: none; margin-top: 8px; }
input[type="checkbox"] { appearance: none; width: 13px; height: 13px; border: 1px solid #999; background: #fff; flex: none; }
input[type="checkbox"]:checked::after { content: ""; display: block; width: 4px; height: 7px; margin: 1px 0 0 4px; border: solid #777; border-width: 0 2px 2px 0; transform: rotate(40deg); }
.drag { border-top: 1px dotted #aaa; margin-top: 16px; padding: 5px 0 18px 4px; }
.areas { display: grid; grid-template-columns: 115px 117px; margin-left: 3px; }
.areas section { border-bottom: 1px solid #b8b8b8; height: 138px; }
.areas section:nth-child(odd) { border-right: 1px solid #b8b8b8; padding-right: 5px; }
.areas section:nth-child(even) { padding-left: 2px; }
.areas section:nth-child(n+3) { border-bottom: 0; height: 139px; padding-top: 7px; }
.areas h3 { display: flex; gap: 7px; height: 23px; padding: 0 0 5px 4px; align-items: center; }
.areas section > div { background: #fff; height: 109px; padding: 2px 1px; }
.areas div button { width: 100%; height: 23px; border: 1px solid #ababab; background: #fff; justify-content: space-between; padding: 0 9px 0 6px; margin-bottom: 2px; }
.areas div svg { color: #000; }
.defer { display: flex; justify-content: space-between; align-items: center; margin: 22px 0 11px 3px; height: 22px; }
.defer label { display: flex; align-items: center; gap: 6px; }
.defer button { width: 34px; height: 22px; background: #fbfbfb; color: #b0b0b0; }

/* status bar */
.status { height: 21px; flex: none; background: #f1f1f1; border-top: 1px solid #c0c0c0; display: flex; align-items: center; padding: 0 20px 0 7px; gap: 19px; }
.status > span { padding-bottom: 2px; }
.views { margin-left: auto; display: flex; align-self: stretch; }
.views button { width: 38px; }
.views .on { background: #c6c6c6; }
.zoom { display: flex; align-items: center; gap: 4px; margin-left: -15px; }
.zoom output { margin-left: 10px; width: 26px; padding-bottom: 2px; }
input[type="range"] { appearance: none; width: 100px; height: 12px; background: linear-gradient(#999, #999) 0 5px / 100% 1px no-repeat, linear-gradient(#999, #999) 50px 3px / 1px 5px no-repeat; }
input[type="range"]::-webkit-slider-thumb { appearance: none; width: 4px; height: 11px; background: #555; border-radius: 0; }

/* floating layers over the worksheet */
.mini, .menu { position: absolute; left: 795px; background: #fff; border: 1px solid #c6c6c6; box-shadow: 1px 2px 4px rgba(0, 0, 0, .2); }
.mini { top: 408px; width: 270px; height: 56px; padding: 3px 3px 0; }
.m1 { grid-template-columns: 68px 50px 25px 20px 21px 10px 26px 16px 26px; }
.m2 { grid-template-columns: 20px 24px 22px 22px 12px 22px 10px 24px 10px 23px 22px 24px; }
.menu { top: 479px; width: 169px; padding: 1px; }
.menu button { width: 100%; height: 25px; justify-content: flex-start; color: #555; padding-bottom: 1px; }
.menu span { width: 21px; height: 21px; display: flex; align-items: center; justify-content: center; margin: 0 9px 0 1px; }
.menu .hot { background: #c6c6c6; color: #333; }
.menu .hot span { background: #e8f3ed; border: 1px solid #86bfa0; }
.menu hr { border: 0; border-top: 1px solid #dcdcdc; margin: 0 1px 1px 33px; }
.arrow { position: absolute; filter: drop-shadow(2px 3px 2px rgba(0, 0, 0, .5)); pointer-events: none; }
.a1 { left: 1203px; top: 538px; }
.a2 { left: 918px; top: 602px; }
.cursor { position: absolute; left: 941px; top: 599px; }
.mark { position: absolute; right: 9px; bottom: 8px; display: flex; opacity: .85; pointer-events: none; }
.mark strong { display: block; font-size: 21px; line-height: 24px; color: #4a90d8; }
.mark span { display: block; font: bold 16px/20px "Liberation Sans", sans-serif; color: #68c08a; }
```
